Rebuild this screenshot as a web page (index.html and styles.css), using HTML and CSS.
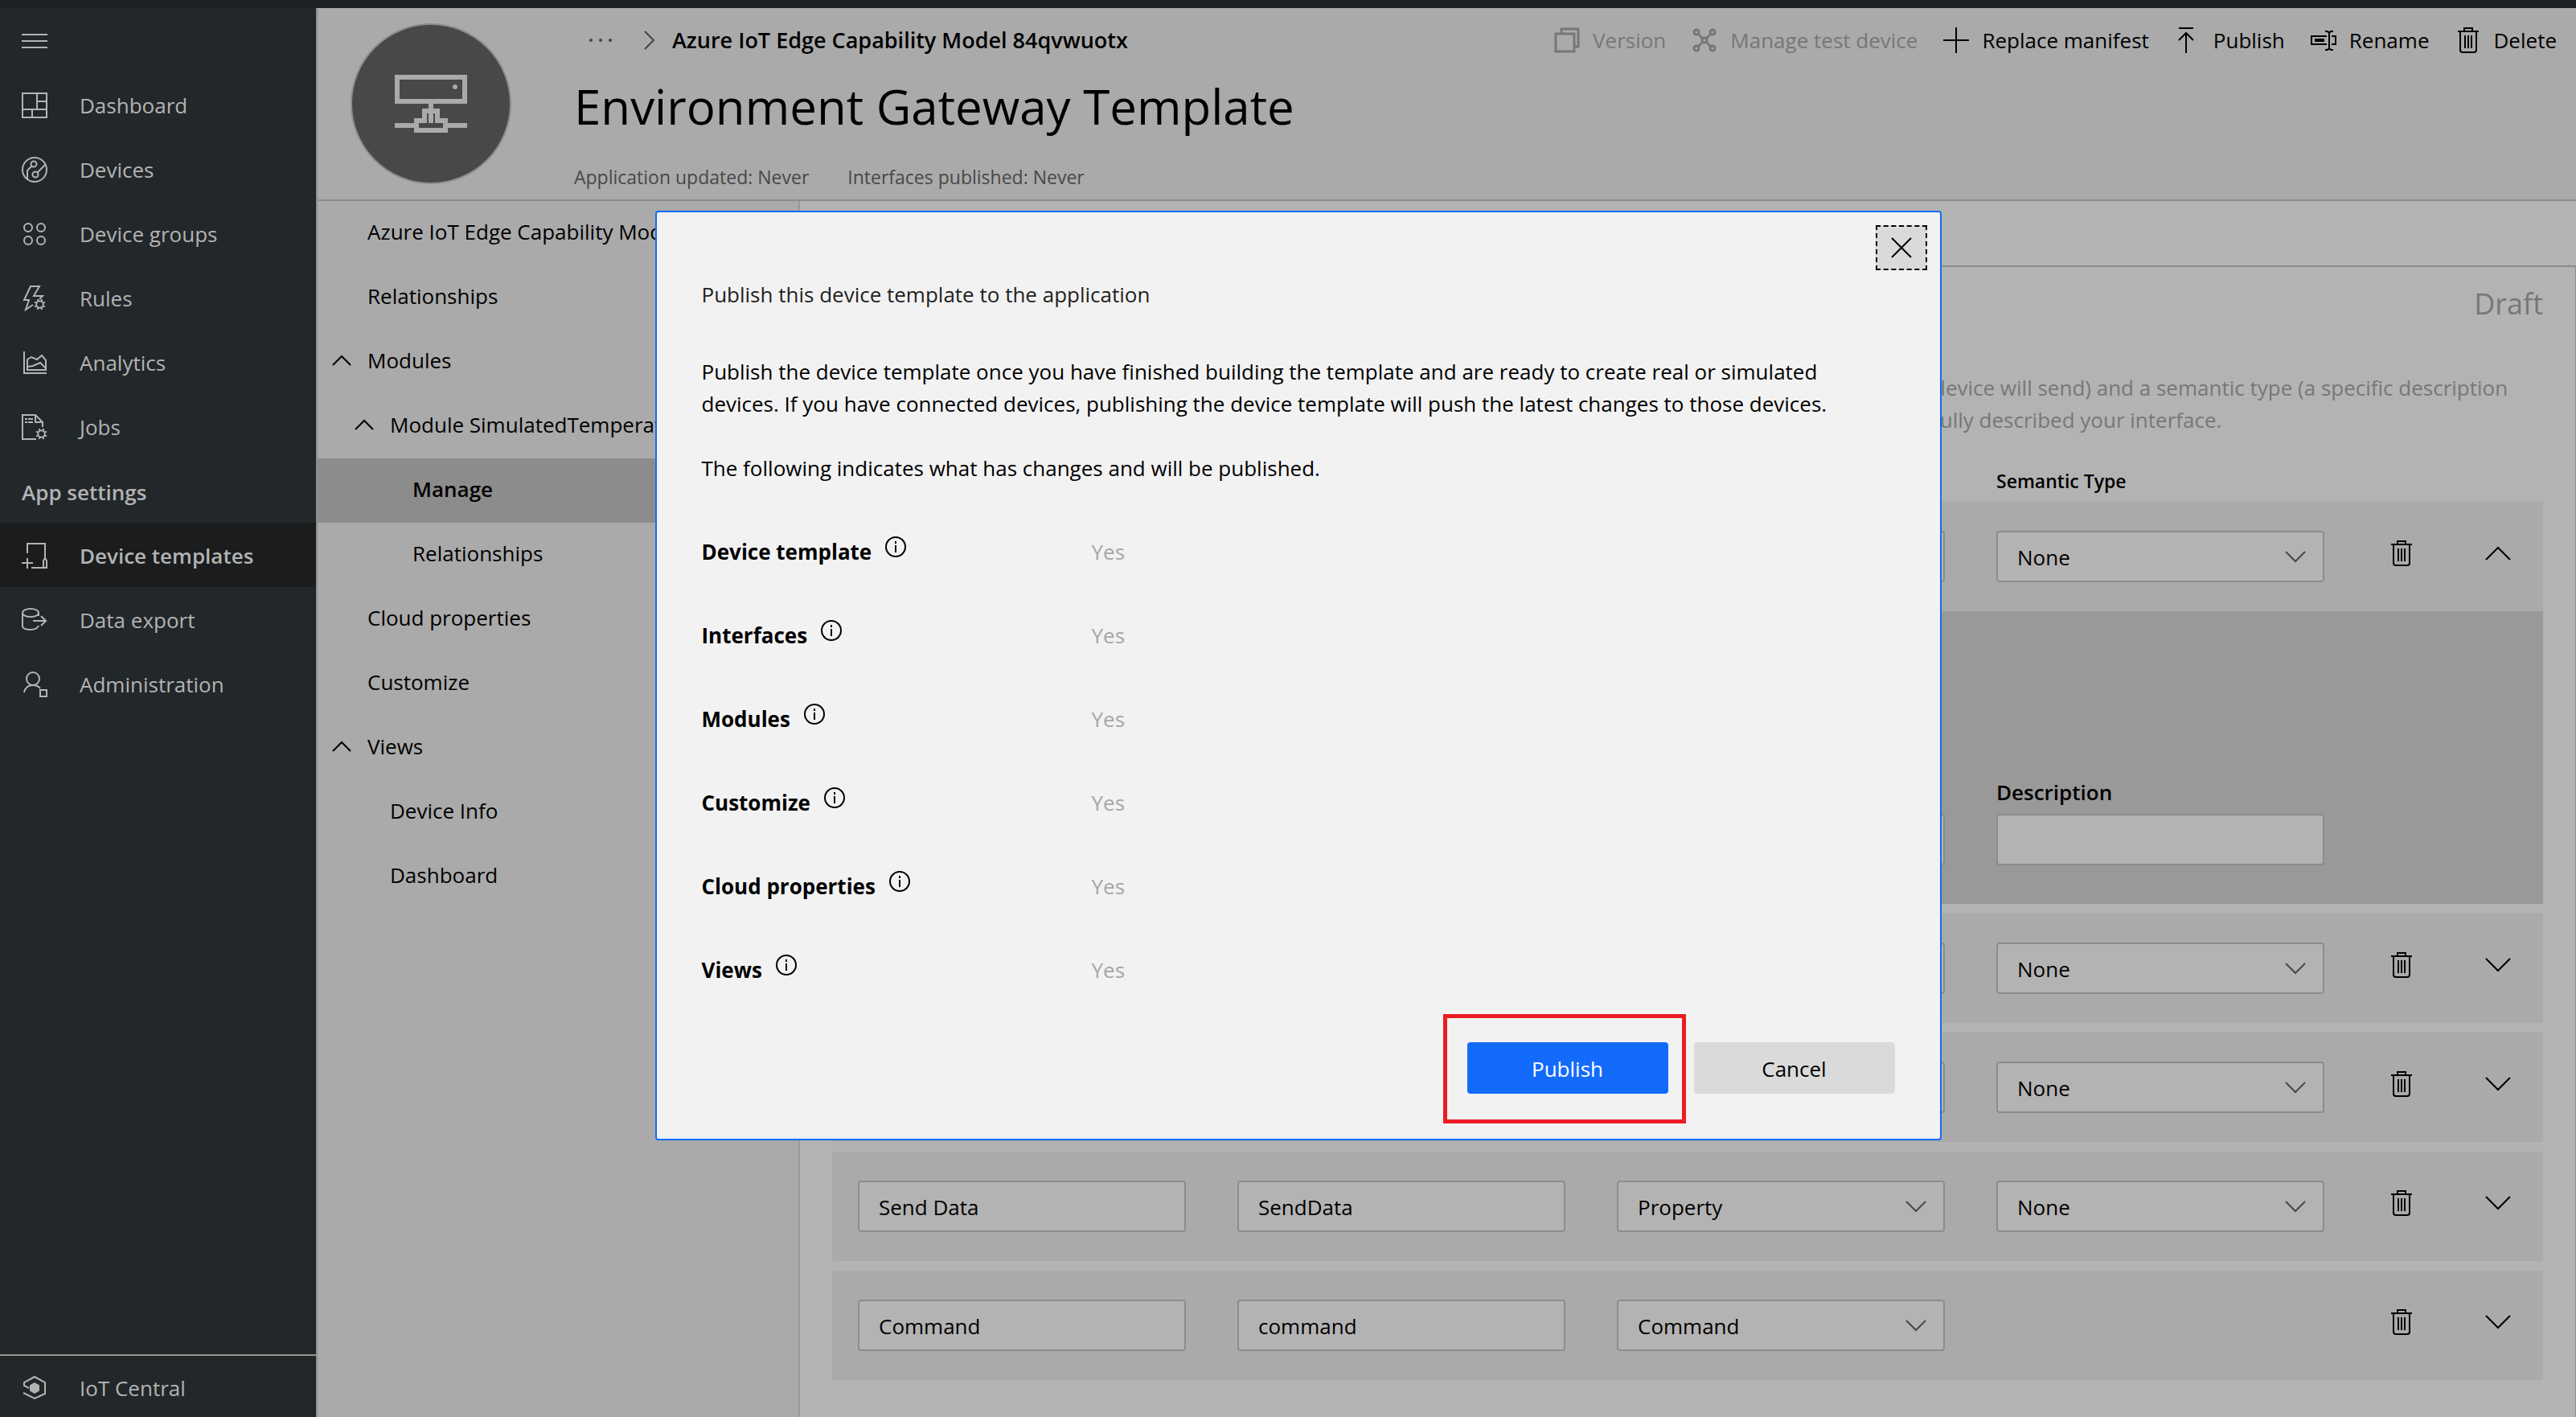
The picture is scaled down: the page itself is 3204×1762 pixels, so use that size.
FILE: index.html
```html
<!DOCTYPE html>
<html lang="en">
<head>
<meta charset="utf-8">
<title>Environment Gateway Template</title>
<link rel="stylesheet" href="styles.css">
</head>
<body>
<svg class="sprite" aria-hidden="true">
  <symbol id="i-trash" viewBox="0 0 32 32"><path d="M3 5h26M11 5V1h10v4M6 5v23q0 3 3 3h14q3 0 3-3V5M12 10v16M16 10v16M20 10v16"/></symbol>
  <symbol id="i-up" viewBox="0 0 32 32"><path d="M1 24 16 9l15 15"/></symbol>
  <symbol id="i-down" viewBox="0 0 32 32"><path d="M1 8l15 15L31 8"/></symbol>
  <symbol id="i-treeup" viewBox="0 0 24 24"><path d="M1 18 12 7l11 11"/></symbol>
  <symbol id="i-info" viewBox="0 0 28 28"><circle cx="14" cy="14" r="12"/><path d="M14 12v9M14 7v3"/></symbol>
  <symbol id="i-gear" viewBox="0 0 16 16"><circle cx="8" cy="8" r="4.500"/><path d="M6 4 5 1M10 4l1-3M6 12l-1 3M10 12l1 3M4 6 1 5M4 10l-3 1M12 6l3-1M12 10l3 1"/></symbol>
</svg>
<div class="app">
  <nav class="sidebar" aria-label="Main">
    <button class="side-item" type="button" aria-label="Toggle navigation"><svg class="icon" viewBox="0 0 32 32"><path d="M0 8h32M0 16h32M0 24h32"/></svg></button>
    <a class="side-item" href="#"><svg class="icon" viewBox="0 0 32 32"><path d="M1 1h30v30H1zM1 21h30M19 1v20M19 11h12M13 21v10"/></svg>Dashboard</a>
    <a class="side-item" href="#"><svg class="icon" viewBox="0 0 32 32"><circle cx="16" cy="16" r="15"/><circle cx="15" cy="9" r="3.500"/><circle cx="17" cy="22" r="3.500"/><path d="M12.500 11.500 7 17v11M19.500 19.500 29.500 9.500"/></svg>Devices</a>
    <a class="side-item" href="#"><svg class="icon" viewBox="0 0 32 32"><circle cx="8" cy="8" r="5"/><circle cx="24" cy="8" r="5"/><circle cx="8" cy="24" r="5"/><circle cx="24" cy="24" r="5"/></svg>Device groups</a>
    <a class="side-item" href="#"><svg class="icon" viewBox="0 0 32 32"><path d="M14 24 5 30l4-12H3L11 1h11l-7 12h11l-4 4"/><svg x="15" y="16" width="15" height="15"><use href="#i-gear"/></svg></svg>Rules</a>
    <a class="side-item" href="#"><svg class="icon" viewBox="0 0 32 32"><path d="M3 2v27h28M7 25V12l5-3 7 3 6-5 5 6v12zM7 21l7-1 9-4 7 7"/></svg>Analytics</a>
    <a class="side-item" href="#"><svg class="icon" viewBox="0 0 32 32"><path d="M18 31H1V1h16l9 9v6M17 1v9h9M4 6h3M8 6h6M4 10h3M8 10h6"/><svg x="17" y="17" width="15" height="15"><use href="#i-gear"/></svg></svg>Jobs</a>
    <h2 class="side-title">App settings</h2>
    <a class="side-item active" href="#" aria-current="page"><svg class="icon" viewBox="0 0 32 32"><path d="M7 13V1h22v18M12 31h19V22l-2-3-2 3v9M7 19v13M0 25h14"/></svg>Device templates</a>
    <a class="side-item" href="#"><svg class="icon" viewBox="0 0 32 32"><ellipse cx="11" cy="7" rx="10" ry="5"/><path d="M1 7v17q1 4 10 4 8 0 10-5M21 7v4M14 17h16M24 11l6 6-6 6"/></svg>Data export</a>
    <a class="side-item" href="#"><svg class="icon" viewBox="0 0 32 32"><circle cx="14" cy="9" r="8"/><path d="M3 26q2-9 11-9 6 0 9 4M23 23h8v8h-8z"/></svg>Administration</a>
    <a class="side-item side-foot" href="#"><svg class="icon" viewBox="0 0 32 32"><path class="solid" d="M16 9l6 3.500v7L16 23l-6-3.500v-7z"/><path d="M9 16 3 13V9l13-7 13 7v14l-13 6L2 22"/></svg>IoT Central</a>
  </nav>

  <div class="main">
    <header class="header">
      <div class="avatar"><svg class="avatar-icon" viewBox="0 0 90 72"><path d="M3 3h84v30H3zM45 36v7M0 63h25M65 63h25M27 57h10V45h16v12h10v12H27zM45 46v14"/><circle class="solid" cx="75" cy="15" r="3"/></svg></div>
      <div class="heading">
        <div class="crumbs"><a class="dots" href="#" aria-label="More"><svg class="icon" viewBox="0 0 32 32"><circle class="solid" cx="3" cy="16" r="2"/><circle class="solid" cx="15" cy="16" r="2"/><circle class="solid" cx="27" cy="16" r="2"/></svg></a><svg class="crumb-sep" viewBox="0 0 16 24"><path d="M2 1l11 11L2 23"/></svg><strong>Azure IoT Edge Capability Model 84qvwuotx</strong></div>
        <h1>Environment Gateway Template</h1>
        <div class="meta"><span>Application updated: Never</span><span>Interfaces published: Never</span></div>
      </div>
      <div class="toolbar">
        <button type="button" disabled><svg class="icon thick" viewBox="0 0 32 32"><path d="M2 8h23v22H2zM9 8V2h21v22h-5"/></svg>Version</button>
        <button type="button" disabled><svg class="icon thick" viewBox="0 0 32 32"><circle cx="6" cy="6" r="3"/><circle cx="26" cy="6" r="3"/><circle cx="6" cy="26" r="3"/><circle cx="26" cy="26" r="3"/><circle cx="16" cy="16" r="3"/><path d="M8 8l6 6M24 8l-6 6M8 24l6-6M24 24l-6-6"/></svg>Manage test device</button>
        <button type="button"><svg class="icon" viewBox="0 0 32 32"><path d="M16 0v32M0 16h32"/></svg>Replace manifest</button>
        <button type="button"><svg class="icon" viewBox="0 0 32 32"><path d="M5 1h18M14 32V8M5 16l9-9 9 9"/></svg>Publish</button>
        <button type="button"><svg class="icon" viewBox="0 0 32 32"><path d="M20 11H1v10h19M26 11h5v10h-5M23 6v21M18 5h3l2 2 2-2h3M18 28h3l2-2 2 2h3"/><path class="solid" d="M5 14h12v4H5z"/></svg>Rename</button>
        <button type="button"><svg class="icon"><use href="#i-trash"/></svg>Delete</button>
      </div>
    </header>

    <div class="body">
      <nav class="tree" aria-label="Template">
        <a href="#">Azure IoT Edge Capability Model 84qvwuotx</a>
        <a href="#">Relationships</a>
        <a href="#" class="open"><svg class="twist"><use href="#i-treeup"/></svg>Modules</a>
        <a href="#" class="open l1"><svg class="twist"><use href="#i-treeup"/></svg>Module SimulatedTemperatureSensor</a>
        <a href="#" class="l2 active">Manage</a>
        <a href="#" class="l2">Relationships</a>
        <a href="#">Cloud properties</a>
        <a href="#">Customize</a>
        <a href="#" class="open"><svg class="twist"><use href="#i-treeup"/></svg>Views</a>
        <a href="#" class="l1">Device Info</a>
        <a href="#" class="l1">Dashboard</a>
      </nav>

      <main class="content">
        <div class="tabs"></div>
        <div class="panel">
          <p class="status">Draft</p>
          <p class="hint">device will send) and a semantic type (a specific description<br>fully described your interface.</p>
          <div class="grid head"><span class="c4" id="sem">Semantic Type</span></div>

          <div class="grid row">
            <select class="c3" aria-label="Capability type"><option></option></select>
            <select aria-labelledby="sem"><option>None</option></select>
            <button type="button" aria-label="Delete"><svg class="icon"><use href="#i-trash"/></svg></button>
            <button type="button" aria-label="Collapse"><svg class="icon"><use href="#i-up"/></svg></button>
          </div>
          <div class="grid details">
            <input class="c3" type="text" aria-label="Comment">
            <div class="field"><label for="desc">Description</label><input id="desc" type="text"></div>
          </div>
          <div class="grid row">
            <select class="c3" aria-label="Capability type"><option></option></select>
            <select aria-labelledby="sem"><option>None</option></select>
            <button type="button" aria-label="Delete"><svg class="icon"><use href="#i-trash"/></svg></button>
            <button type="button" aria-label="Expand"><svg class="icon"><use href="#i-down"/></svg></button>
          </div>
          <div class="grid row">
            <select class="c3" aria-label="Capability type"><option></option></select>
            <select aria-labelledby="sem"><option>None</option></select>
            <button type="button" aria-label="Delete"><svg class="icon"><use href="#i-trash"/></svg></button>
            <button type="button" aria-label="Expand"><svg class="icon"><use href="#i-down"/></svg></button>
          </div>
          <div class="grid row">
            <input type="text" value="Send Data" aria-label="Display name">
            <input type="text" value="SendData" aria-label="Name">
            <select aria-label="Capability type"><option>Property</option></select>
            <select aria-labelledby="sem"><option>None</option></select>
            <button type="button" aria-label="Delete"><svg class="icon"><use href="#i-trash"/></svg></button>
            <button type="button" aria-label="Expand"><svg class="icon"><use href="#i-down"/></svg></button>
          </div>
          <div class="grid row">
            <input type="text" value="Command" aria-label="Display name">
            <input type="text" value="command" aria-label="Name">
            <select aria-label="Capability type"><option>Command</option></select>
            <button class="c5" type="button" aria-label="Delete"><svg class="icon"><use href="#i-trash"/></svg></button>
            <button type="button" aria-label="Expand"><svg class="icon"><use href="#i-down"/></svg></button>
          </div>
        </div>
      </main>
    </div>
  </div>
</div>

<div class="overlay">
  <section class="dialog" role="dialog" aria-labelledby="dlg">
    <button class="close" type="button" aria-label="Close"><svg class="close-icon" viewBox="0 0 26 26"><path d="M1 1l24 24M25 1 1 25"/></svg></button>
    <h2 id="dlg">Publish this device template to the application</h2>
    <p>Publish the device template once you have finished building the template and are ready to create real or simulated<br>devices. If you have connected devices, publishing the device template will push the latest changes to those devices.</p>
    <p>The following indicates what has changes and will be published.</p>
    <dl>
      <dt>Device template<svg class="info"><use href="#i-info"/></svg></dt><dd>Yes</dd>
      <dt>Interfaces<svg class="info"><use href="#i-info"/></svg></dt><dd>Yes</dd>
      <dt>Modules<svg class="info"><use href="#i-info"/></svg></dt><dd>Yes</dd>
      <dt>Customize<svg class="info"><use href="#i-info"/></svg></dt><dd>Yes</dd>
      <dt>Cloud properties<svg class="info"><use href="#i-info"/></svg></dt><dd>Yes</dd>
      <dt>Views<svg class="info"><use href="#i-info"/></svg></dt><dd>Yes</dd>
    </dl>
    <div class="actions">
      <div class="marked"><button class="btn primary" type="button">Publish</button></div>
      <button class="btn" type="button">Cancel</button>
    </div>
  </section>
</div>
</body>
</html>
```
FILE: styles.css
```css
* { box-sizing: border-box; }
body {
  margin: 0;
  font: 26px/40px "Open Sans", "Noto Sans", sans-serif;
  color: #000;
  background: #b3b3b3;
}
h1, h2, p, dl, dd { margin: 0; font-weight: 400; }
a { color: inherit; text-decoration: none; }
button, input, select { font: inherit; color: inherit; margin: 0; }
button { border: 0; padding: 0; background: none; }
svg { fill: none; stroke: currentColor; stroke-width: 2; flex: none; display: block; }
.sprite { position: absolute; width: 0; height: 0; }
.solid { fill: currentColor; stroke: none; }
.icon { width: 32px; height: 32px; }
.thick { stroke-width: 3; }

.app { display: flex; height: 100vh; border-top: 10px solid #1d2123; overflow: hidden; }

/* Left navigation */
.sidebar {
  width: 395px;
  flex: none;
  display: flex;
  flex-direction: column;
  background: #22272a;
  color: #b3b3b3;
  border-right: 2px solid #8f8f8f;
}
.side-item { height: 80px; flex: none; display: flex; align-items: center; gap: 40px; padding: 2px 27px 0; }
.side-title { height: 80px; flex: none; padding: 22px 27px; font-size: 26px; font-weight: 600; }
.side-item.active { background: #1b1c1d; font-weight: 600; }
.side-foot { height: 78px; margin-top: auto; padding-top: 4px; border-top: 2px solid #9b9691; }

/* Header */
.main { flex: 1; min-width: 0; display: flex; flex-direction: column; }
.header { display: flex; height: 240px; padding: 0 24px 0 41px; background: #aaa; border-bottom: 2px solid #8c8c8c; }
.avatar {
  width: 200px;
  height: 200px;
  margin-top: 19px;
  flex: none;
  display: flex;
  align-items: center;
  justify-content: center;
  border: 2px solid #8c8c8c;
  border-radius: 50%;
  background: #484848;
  color: #aaa;
}
.avatar-icon { width: 90px; height: 72px; stroke-width: 6; }
.heading { flex: 1; padding: 20px 0 0 78px; }
.crumbs { display: flex; align-items: center; font-size: 27px; }
.crumbs strong { font-weight: 600; margin-left: 20px; }
.dots { margin: 0 36px 0 18px; color: #444; }
.crumb-sep { width: 16px; height: 24px; color: #444; }
h1 { font-size: 60px; line-height: 88px; margin-top: 18px; }
.meta { display: flex; gap: 48px; margin-top: 24px; font-size: 23px; color: #484848; }
.toolbar { display: flex; align-items: flex-start; gap: 32px; padding-top: 20px; }
.toolbar button { display: flex; align-items: center; gap: 16px; white-space: nowrap; }
.toolbar button:disabled { color: #777; }

/* Template tree */
.body { flex: 1; display: flex; }
.tree { width: 600px; flex: none; background: #aaa; border-right: 2px solid #999; }
.tree a { display: flex; align-items: center; height: 80px; padding: 0 0 4px 62px; white-space: nowrap; }
.tree .open { padding-left: 18px; gap: 20px; }
.tree .l1 { padding-left: 90px; }
.tree .l2 { padding-left: 118px; }
.tree .open.l1 { padding-left: 46px; }
.tree .active { background: #8c8c8c; font-weight: 600; }
.twist { width: 24px; height: 24px; }

/* Interface editor */
.content { flex: 1; min-width: 0; display: flex; flex-direction: column; }
.tabs { height: 82px; flex: none; border-bottom: 2px solid #8c8c8c; }
.panel { flex: 1; padding: 14px 40px 0; border-right: 1px solid #8c8c8c; }
.status { font-size: 36px; line-height: 64px; text-align: right; color: #777; }
.hint { width: 759px; margin: 52px 0 0 auto; white-space: nowrap; color: #777; }
.grid {
  display: grid;
  grid-template-columns: repeat(4, 408px) 64px 48px;
  column-gap: 64px;
  align-items: center;
  padding: 0 32px;
}
.grid button { justify-self: center; padding-bottom: 8px; }
.row button:last-child { grid-column: 6; }
.c3 { grid-column: 3; }
.c4 { grid-column: 4; }
.c5 { grid-column: 5; }
.head { height: 46px; margin-top: 36px; padding-bottom: 6px; font-size: 23px; font-weight: 600; }
.row { height: 136px; margin-bottom: 12px; background: #aaa; }
.details { height: 364px; margin: -12px 0 12px; padding-bottom: 48px; align-items: end; background: #999; }
.field { display: grid; font-weight: 600; gap: 7px; }
input, select {
  width: 100%;
  height: 64px;
  padding: 2px 24px 0;
  border: 2px solid #8c8c8c;
  border-radius: 4px;
  background: #b3b3b3;
}
select {
  appearance: none;
  background: #b3b3b3 url("data:image/svg+xml,%3Csvg xmlns='http://www.w3.org/2000/svg' width='26' height='16'%3E%3Cpath d='M1 2l12 12L25 2' fill='none' stroke='%23484848' stroke-width='2'/%3E%3C/svg%3E") no-repeat right 21px center;
}

/* Publish dialog */
.overlay { position: absolute; inset: 0; display: flex; justify-content: center; align-items: flex-start; padding: 262px 0 0 25px; }
.dialog { position: relative; width: 1600px; min-height: 1156px; padding: 82px 56px 56px; border: 2px solid #136bfb; border-radius: 4px; background: #f2f2f2; display: flex; flex-direction: column; }
.close {
  position: absolute;
  top: 16px;
  right: 16px;
  width: 64px;
  height: 56px;
  display: flex;
  align-items: center;
  justify-content: center;
  border: 2px dashed #000;
  background: #dadada;
}
.close-icon { width: 26px; height: 26px; }
.dialog h2 { font-size: 26px; color: #222; margin-bottom: 56px; }
.dialog p { margin-bottom: 40px; }
dl { display: grid; grid-template-columns: 485px 1fr; row-gap: 64px; margin-top: 24px; }
dt { display: flex; gap: 16px; font-weight: 700; }
dd { color: #a6a6a6; }
.info { width: 28px; height: 28px; }
.actions { display: flex; justify-content: flex-end; gap: 32px; margin-top: auto; }
.btn { width: 250px; height: 64px; padding-top: 2px; border-radius: 4px; background: #dadada; }
.primary { background: #136bfb; color: #fff; }
.marked { position: relative; }
.marked::after { content: ""; position: absolute; inset: -35px -22px -37px -30px; border: 5px solid #ed1c24; pointer-events: none; }
```
